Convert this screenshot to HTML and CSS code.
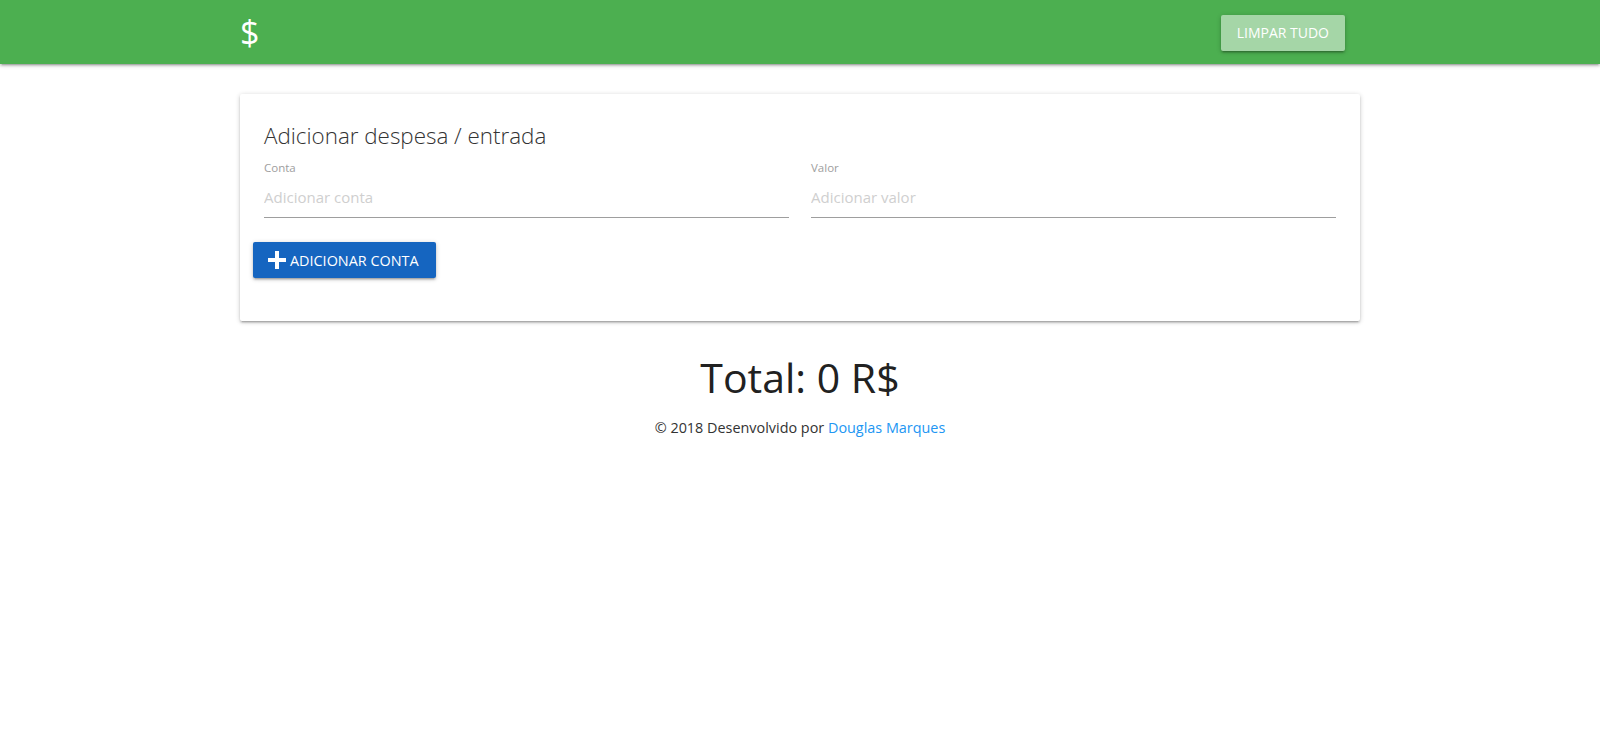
FILE: index.html
```html
<!DOCTYPE html>
<html lang="pt-BR">
<head>
<meta charset="utf-8">
<title>Contas</title>
<link rel="stylesheet" href="styles.css">
</head>
<body>
<nav class="navbar">
  <div class="container nav-inner">
    <a class="brand" href="#">$</a>
    <button class="btn btn-clear" type="button">Limpar tudo</button>
  </div>
</nav>
<main class="container">
  <section class="card">
    <div class="card-content">
      <h2 class="card-title">Adicionar despesa / entrada</h2>
      <div class="fields">
        <div class="field">
          <label class="field-label" for="conta">Conta</label>
          <input class="field-input" id="conta" type="text" placeholder="Adicionar conta">
        </div>
        <div class="field">
          <label class="field-label" for="valor">Valor</label>
          <input class="field-input" id="valor" type="text" placeholder="Adicionar valor">
        </div>
      </div>
      <div class="actions">
        <button class="btn btn-add" type="button">
          <svg class="plus" width="18" height="18" viewBox="0 0 18 18" aria-hidden="true"><rect x="7" y="0" width="4" height="18" fill="#fff"/><rect x="0" y="7" width="18" height="4" fill="#fff"/></svg>
          <span>Adicionar conta</span>
        </button>
      </div>
    </div>
  </section>
  <h1 class="total">Total: 0 R$</h1>
  <p class="footer">© 2018 Desenvolvido por <a href="#">Douglas Marques</a></p>
</main>
</body>
</html>
```

FILE: styles.css
```css
html, body {
  margin: 0;
  padding: 0;
  background: #fff;
}
body {
  font-family: "Open Sans", "Noto Sans", sans-serif;
  color: rgba(0,0,0,0.87);
}
.container {
  width: 70%;
  margin: 0 auto;
}
.navbar {
  height: 64px;
  background: #4caf50;
  box-shadow: 0 2px 2px 0 rgba(0,0,0,.14), 0 3px 1px -2px rgba(0,0,0,.12), 0 1px 5px 0 rgba(0,0,0,.2);
}
.nav-inner {
  height: 64px;
  display: flex;
  align-items: center;
  justify-content: space-between;
  padding-right: 15px;
  box-sizing: border-box;
}
.brand {
  color: #fff;
  text-decoration: none;
  font-size: 34px;
  line-height: 64px;
  font-weight: 400;
}
.btn {
  display: inline-flex;
  align-items: center;
  height: 36px;
  border: none;
  border-radius: 2px;
  padding: 0 16px;
  font-family: inherit;
  font-size: 14px;
  text-transform: uppercase;
  color: #fff;
  letter-spacing: 0;
  box-shadow: 0 2px 2px 0 rgba(0,0,0,.14), 0 3px 1px -2px rgba(0,0,0,.12), 0 1px 5px 0 rgba(0,0,0,.2);
  cursor: pointer;
}
.btn-clear {
  background: #a5d6a7;
  margin-top: 1px;
}
.card {
  margin-top: 30px;
  background: #fff;
  border-radius: 2px;
  box-shadow: 0 2px 2px 0 rgba(0,0,0,.14), 0 3px 1px -2px rgba(0,0,0,.12), 0 1px 5px 0 rgba(0,0,0,.2);
}
.card-content {
  padding: 26px 24px 24px;
}
.card-title {
  margin: 0 0 8px;
  font-size: 22.4px;
  line-height: 32px;
  font-weight: 300;
  color: #333;
}
.fields {
  display: grid;
  grid-template-columns: 1fr 1fr;
  column-gap: 22px;
}
.field {
  display: flex;
  flex-direction: column;
}
.field-label {
  font-size: 11.5px;
  line-height: 16px;
  color: #9e9e9e;
}
.field-input {
  height: 41px;
  border: none;
  border-bottom: 1px solid #9e9e9e;
  padding: 0;
  margin: 0;
  outline: none;
  font-family: inherit;
  font-size: 15px;
  background: transparent;
}
.field-input::placeholder {
  color: #cfcfcf;
}
.actions {
  margin: 24px -11px 19px;
}
.btn-add {
  background: #1565c0;
  gap: 4px;
  padding: 0 17px 0 15px;
  font-size: 14.4px;
}
.total {
  margin: 31px 0 0;
  text-align: center;
  font-size: 41px;
  line-height: 50px;
  font-weight: 400;
  color: #212121;
}
.footer {
  margin: 16px 0 0;
  text-align: center;
  font-size: 14.4px;
  line-height: 20px;
  color: #333;
}
.footer a {
  color: #2196f3;
  text-decoration: none;
}
```
